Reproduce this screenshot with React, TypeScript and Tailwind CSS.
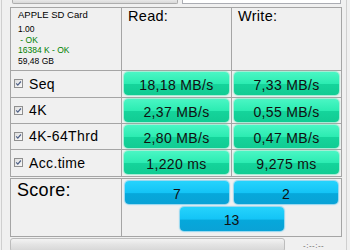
const rows = [
  { label: "Seq", read: "18,18 MB/s", write: "7,33 MB/s", h: "h-[27px]" },
  { label: "4K", read: "2,37 MB/s", write: "0,55 MB/s", h: "h-[26px]" },
  { label: "4K-64Thrd", read: "2,80 MB/s", write: "0,47 MB/s", h: "h-[26px]" },
  { label: "Acc.time", read: "1,220 ms", write: "9,275 ms", h: "h-[27px]" },
];

function CheckBox() {
  return (
    <svg width="9" height="9" viewBox="0 0 9 9" className="shrink-0">
      <defs>
        <linearGradient id="cb" x1="0" y1="0" x2="1" y2="1">
          <stop offset="0" stopColor="#dcdcdc" />
          <stop offset="1" stopColor="#fbfbfb" />
        </linearGradient>
      </defs>
      <rect x="0.5" y="0.5" width="8" height="8" fill="url(#cb)" stroke="#8f8f8f" />
      <path d="M2.2 4.4 L3.8 6.1 L6.9 2.5" fill="none" stroke="#4d5f86" strokeWidth="1.2" />
    </svg>
  );
}

function GreenCell({ value }: { value: string }) {
  return (
    <div className="ml-[2px] mt-[1px] w-[105px] h-[23px] rounded-[4px] flex items-center justify-center bg-[linear-gradient(to_bottom,#4af6c4_0%,#2cecb2_50%,#15d49b_54%,#11cc93_100%)] shadow-[0_0_1px_1px_rgba(90,235,185,0.55)] text-[14px] tracking-[0.35px] text-[#101010] leading-none pt-[2px]">
      {value}
    </div>
  );
}

function BlueCell({ value, tall }: { value: string; tall?: boolean }) {
  return (
    <div
      className={`w-[104px] ${tall ? "h-[24px]" : "h-[23px]"} rounded-[4px] flex items-center justify-center bg-[linear-gradient(to_bottom,#26d3fc_0%,#14c4f6_50%,#06a8db_55%,#0aa2d6_100%)] shadow-[0_0_1px_1px_rgba(70,195,240,0.55)] text-[14px] text-[#101010] leading-none pt-[2px]`}
    >
      {value}
    </div>
  );
}

export default function App() {
  return (
    <div className="w-[350px] h-[250px] bg-[#f0f0f0] overflow-hidden font-['Liberation_Sans',Arial,sans-serif] text-black">
      <div className="ml-[1px] w-[346px] h-full border-x border-[#cfcfcf]">
        {/* bottom edges of the drive / count controls */}
        <div className="flex h-[4px]">
          <div className="ml-[10px] w-[166px] border-x border-b border-[#adadad] rounded-b-[2px] bg-[linear-gradient(to_bottom,#e8e8e8,#d9d9d9)]" />
          <div className="ml-[4px] w-[159px] border-x border-b border-[#abadb3] bg-white" />
        </div>

        <div className="ml-[8px] mt-[3px] w-[332px] border-l border-t border-[#a5a5a5]">
          <div className="flex h-[63px]">
            <div className="w-[111px] border-r border-b border-[#a5a5a5] pl-[7px] pt-[1px]">
              <div className="text-[9.5px] leading-[12px] mb-[3px]">APPLE SD Card</div>
              <div className="text-[8.5px] leading-[10.5px]">1.00</div>
              <div className="text-[8.5px] leading-[10.5px] text-[#008000] whitespace-pre"> - OK</div>
              <div className="text-[8.5px] leading-[10.5px] text-[#008000]">16384 K - OK</div>
              <div className="text-[8.5px] leading-[10.5px]">59,48 GB</div>
            </div>
            <div className="w-[110px] border-r border-b border-[#a5a5a5] pl-[6px] text-[14.5px] tracking-[0.3px] leading-[16px]">
              Read:
            </div>
            <div className="w-[110px] border-r border-b border-[#a5a5a5] pl-[6px] text-[14.5px] tracking-[0.3px] leading-[16px]">
              Write:
            </div>
          </div>

          {rows.map((r) => (
            <div key={r.label} className={`flex ${r.h}`}>
              <div className="w-[111px] border-r border-b border-[#a5a5a5] flex items-center pl-[3px] gap-[6px] pb-[1px]">
                <CheckBox />
                <span className="text-[14px] tracking-[0.35px] leading-none">{r.label}</span>
              </div>
              <div className="w-[110px] border-r border-b border-[#a5a5a5]">
                <GreenCell value={r.read} />
              </div>
              <div className="w-[110px] border-r border-b border-[#a5a5a5]">
                <GreenCell value={r.write} />
              </div>
            </div>
          ))}
        </div>

        <div className="ml-[8px] mt-[1px] w-[332px] h-[59px] border border-[#a5a5a5] flex">
          <div className="w-[111px] border-r border-[#a5a5a5] pl-[6px] text-[18px] tracking-[0.3px] leading-[22px]">
            Score:
          </div>
          <div className="flex-1 pt-[2px]">
            <div className="flex gap-[5px] pl-[3px]">
              <BlueCell value="7" />
              <BlueCell value="2" />
            </div>
            <div className="mt-[3px] flex justify-center">
              <BlueCell value="13" tall />
            </div>
          </div>
        </div>

        <div className="flex items-start mt-[1px]">
          <div className="ml-[8px] w-[275px] h-[14px] border border-[#bcbcbc] rounded-[3px] bg-[linear-gradient(to_bottom,#f3f3f3_0%,#e4e4e4_45%,#d6d6d6_100%)]" />
          <div className="ml-[18px] mt-[4px] text-[8px] leading-[8px] text-[#606060] tracking-[0.5px]">-:--:--</div>
        </div>
      </div>
    </div>
  );
}
